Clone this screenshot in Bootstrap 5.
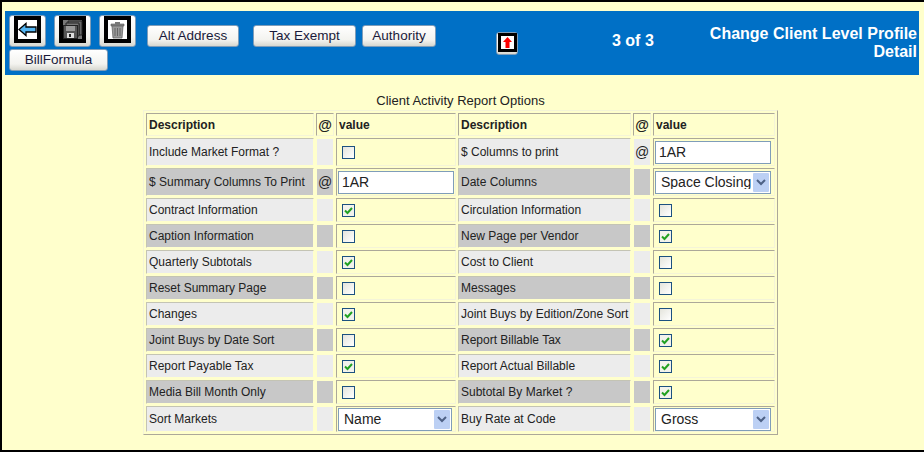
<!DOCTYPE html>
<html lang="en">
<head>
  <meta charset="UTF-8">
  <title>Change Client Level Profile Detail</title>
  <link href="https://cdn.jsdelivr.net/npm/bootstrap@5.3.0/dist/css/bootstrap.min.css" rel="stylesheet">
  <style>
    html, body { height: 100%; }
    body {
      font-family: "Liberation Sans", Arial, sans-serif;
      font-size: 12px;
      color: #222;
      background: #ffffcc;
      border-top: 2px solid #000;
      border-left: 2px solid #000;
      border-bottom: 2px solid #000;
      overflow: hidden;
    }
    .page-wrap { padding: 9px 5px 0 3px; }
    .top-band {
      background: #0070c6;
      height: 64px;
      padding: 4px 2px 0 4px;
      color: #fff;
    }
    .tool-strip { width: 440px; row-gap: 2px; }
    .tool-btn {
      font-family: "Liberation Sans", Arial, sans-serif;
      font-size: 13.5px;
      line-height: 1;
      color: #1a1a3a;
      height: 22px;
      padding: 0;
      border: 1px solid #7f9db9;
      border-radius: 3px;
      background: linear-gradient(#fff, #f3f3ef 70%, #d8d8d0);
    }
    .tool-btn:hover { color: #1a1a3a; border-color: #7f9db9; background: #f3f3ef; }
    .img-btn { width: 37px; height: 32px; margin-right: 8px; display: flex; align-items: flex-start; justify-content: center; }
    .img-btn svg { display: block; }
    .btn-alt { width: 92px; margin-left: 3px; margin-right: 14px; }
    .btn-tax { width: 103px; margin-right: 6px; }
    .btn-auth { width: 74px; }
    .btn-bill { width: 99px; }
    .pager-btn { width: 22px; height: 23px; margin: 17px 0 0 47px; display: flex; justify-content: center; align-items: flex-start; }
    .rec-count { width: 173px; margin-top: 14px; padding: 2px 0 0 94px; font-size: 16px; font-weight: 700; line-height: 20px; }
    .screen-title { flex: 1; text-align: right; font-size: 16px; font-weight: 700; line-height: 18px; padding-top: 10px; white-space: nowrap; }

    .grid-title { text-align: center; height: 35px; padding-top: 19px; font-size: 13px; line-height: 14px; width: 635px; margin-left: 138px; }
    .opts-grid {
      width: 635px;
      margin-left: 138px;
      table-layout: fixed;
      border-collapse: separate;
      border-spacing: 2px;
      border: 1px solid;
      border-color: #f4f4d8 #aca899 #aca899 #f4f4d8;
    }
    .opts-grid td {
      padding: 0 0 0 2px;
      border: 1px solid;
      border-color: #aca899 #f4f4d8 #f4f4d8 #aca899;
      vertical-align: middle;
      white-space: nowrap;
      overflow: hidden;
    }
    .opts-grid td.cell-at { padding: 0; text-align: center; font-size: 14px; }
    .opts-grid td.cell-val { padding: 0 0 0 1px; }
    .opts-grid td.shade-a, .opts-grid td.shade-b { border-color: #c4c4b4 #ffffcc #ffffcc #c4c4b4; }
    .opts-grid td.cell-at.shade-a, .opts-grid td.cell-at.shade-b { border-color: #ffffcc; }
    .opts-grid .r-head td { height: 23px; line-height: 16px; font-weight: 700; padding-top: 1px; }
    .r-tall td { height: 28px; }
    .r-norm td { height: 24px; }
    .r-last td { height: 26px; }
    .opts-grid .shade-a { background: #ececec; background-clip: padding-box; }
    .opts-grid .shade-b { background: #c8c8c8; background-clip: padding-box; }
    .opts-grid .head-at { font-size: 14px; }

    .opts-grid .val-input {
      width: 116px;
      height: 23px;
      padding: 0 0 0 3px;
      border: 1px solid #7f9db9;
      border-radius: 0;
      font-size: 14px;
      line-height: 1;
      color: #222;
      background: #fff;
    }
    .opts-grid .val-select {
      width: 116px;
      height: 23px;
      padding: 0 0 0 5px;
      border: 1px solid #7f9db9;
      border-radius: 0;
      font-size: 14px;
      line-height: 1;
      color: #222;
      background-color: #fff;
      background-image: url("data:image/svg+xml,%3Csvg xmlns='http://www.w3.org/2000/svg' width='16' height='19'%3E%3Crect width='16' height='19' rx='1' fill='%23bcd0f4'/%3E%3Cpath d='M4 7l4 4 4-4' fill='none' stroke='%234d6185' stroke-width='2'/%3E%3C/svg%3E");
      background-repeat: no-repeat;
      background-position: right 1px center;
      background-size: 16px 19px;
    }
    .opts-grid .val-narrow { width: 114px; }
    .opts-grid .tick-box {
      width: 13px;
      height: 13px;
      margin: 0 0 0 4px;
      display: block;
      border: 1px solid #1c5180;
      border-radius: 0;
      background-color: #f2f2ec;
      background-image: linear-gradient(135deg, #e4e4dc, #fff);
    }
    .opts-grid .tick-box:checked {
      border-color: #1c5180;
      background-color: #f2f2ec;
      background-image: url("data:image/svg+xml,%3Csvg xmlns='http://www.w3.org/2000/svg' width='11' height='11'%3E%3Cpath d='M2 5.5l2.5 2.5 4.5-5' fill='none' stroke='%2321a121' stroke-width='2'/%3E%3C/svg%3E");
      background-size: 11px 11px;
    }
  </style>
</head>
<body>
  <div class="page-wrap">
    <div class="top-band d-flex align-items-start">
      <div class="tool-strip d-flex flex-wrap align-items-end">
        <button type="button" class="btn tool-btn img-btn" aria-label="Back">
          <svg width="27" height="27" viewBox="0 0 27 27">
            <rect x="2" y="2" width="23" height="23" fill="#fff" stroke="#000" stroke-width="4"/>
            <path d="M5 13.500 12 7.500V11H22V16H12V19.500Z" fill="#52b4f2" stroke="#000" stroke-width="1.300"/>
          </svg>
        </button>
        <button type="button" class="btn tool-btn img-btn" aria-label="Save">
          <svg width="27" height="27" viewBox="0 0 27 27">
            <rect x="2" y="2" width="23" height="23" fill="#777" stroke="#000" stroke-width="4"/>
            <path d="M9 5H23V19H20V8H9Z" fill="#666" stroke="#222"/>
            <path d="M7 7H20V20H18V10H7Z" fill="#777" stroke="#222"/>
            <rect x="4.500" y="9.500" width="14" height="13" fill="#555" stroke="#222"/>
            <rect x="7" y="10" width="9" height="5" fill="#999"/>
            <rect x="8" y="17" width="7" height="5" fill="#ddd"/>
            <rect x="10" y="18" width="2" height="3" fill="#222"/>
          </svg>
        </button>
        <button type="button" class="btn tool-btn img-btn" aria-label="Delete">
          <svg width="27" height="27" viewBox="0 0 27 27">
            <rect x="2" y="2" width="23" height="23" fill="#fff" stroke="#000" stroke-width="4"/>
            <path d="M7 8H20V10H7Z" fill="#888" stroke="#555" stroke-width=".6"/>
            <rect x="11" y="6" width="5" height="2" fill="#777"/>
            <path d="M8 10H19L18 22H9Z" fill="#999" stroke="#666" stroke-width=".8"/>
            <path d="M11 12V20M13.500 12V20M16 12V20" stroke="#666" stroke-width="1"/>
          </svg>
        </button>
        <button type="button" class="btn tool-btn btn-alt">Alt Address</button>
        <button type="button" class="btn tool-btn btn-tax">Tax Exempt</button>
        <button type="button" class="btn tool-btn btn-auth">Authority</button>
        <button type="button" class="btn tool-btn btn-bill">BillFormula</button>
      </div>
      <button type="button" class="btn tool-btn pager-btn" aria-label="Up">
        <svg width="19" height="19" viewBox="0 0 19 19">
          <rect x="1.500" y="1.500" width="16" height="16" fill="#fff" stroke="#000" stroke-width="3"/>
          <path d="M9.500 4 14 9H11.500V15H7.500V9H5Z" fill="#f00"/>
        </svg>
      </button>
      <div class="rec-count">3 of 3</div>
      <div class="screen-title">Change Client Level Profile<br>Detail</div>
    </div>
    <div class="grid-title">Client Activity Report Options</div>
    <table class="opts-grid">
      <colgroup>
        <col style="width:168px"><col style="width:18px"><col style="width:120px">
        <col style="width:173px"><col style="width:18px"><col style="width:122px">
      </colgroup>
      <tbody id="opts-body"></tbody>
    </table>
  </div>

  <script src="https://cdn.jsdelivr.net/npm/bootstrap@5.3.0/dist/js/bootstrap.bundle.min.js"></script>
  <script>
    // [label, at-sign, control] pairs, left half then right half
    const box = c => `<input class="form-check-input tick-box" type="checkbox" ${c ? 'checked' : ''}>`;
    const text = v => `<input class="form-control val-input" type="text" value="${v}">`;
    const pick = (v, cls = '') => `<select class="form-select val-select ${cls}"><option>${v}</option></select>`;

    const rows = [
      ['r-tall', 'Include Market Format ?', '', box(0), '$ Columns to print', '@', text('1AR')],
      ['r-tall', '$ Summary Columns To Print', '@', text('1AR'), 'Date Columns', '', pick('Space Closing')],
      ['r-norm', 'Contract Information', '', box(1), 'Circulation Information', '', box(0)],
      ['r-norm', 'Caption Information', '', box(0), 'New Page per Vendor', '', box(1)],
      ['r-norm', 'Quarterly Subtotals', '', box(1), 'Cost to Client', '', box(0)],
      ['r-norm', 'Reset Summary Page', '', box(0), 'Messages', '', box(0)],
      ['r-norm', 'Changes', '', box(1), 'Joint Buys by Edition/Zone Sort', '', box(0)],
      ['r-norm', 'Joint Buys by Date Sort', '', box(0), 'Report Billable Tax', '', box(1)],
      ['r-norm', 'Report Payable Tax', '', box(1), 'Report Actual Billable', '', box(1)],
      ['r-norm', 'Media Bill Month Only', '', box(0), 'Subtotal By Market ?', '', box(1)],
      ['r-last', 'Sort Markets', '', pick('Name', 'val-narrow'), 'Buy Rate at Code', '', pick('Gross')]
    ];

    let html = `<tr class="r-head"><td>Description</td><td class="cell-at head-at">@</td><td>value</td>
      <td>Description</td><td class="cell-at head-at">@</td><td>value</td></tr>`;
    rows.forEach((r, i) => {
      const shade = i % 2 === 0 ? 'shade-a' : 'shade-b';
      html += `<tr class="${r[0]}">
        <td class="${shade}">${r[1]}</td><td class="cell-at ${shade}">${r[2]}</td><td class="cell-val">${r[3]}</td>
        <td class="${shade}">${r[4]}</td><td class="cell-at ${shade}">${r[5]}</td><td class="cell-val">${r[6]}</td>
      </tr>`;
    });
    document.getElementById('opts-body').innerHTML = html;
  </script>
</body>
</html>
